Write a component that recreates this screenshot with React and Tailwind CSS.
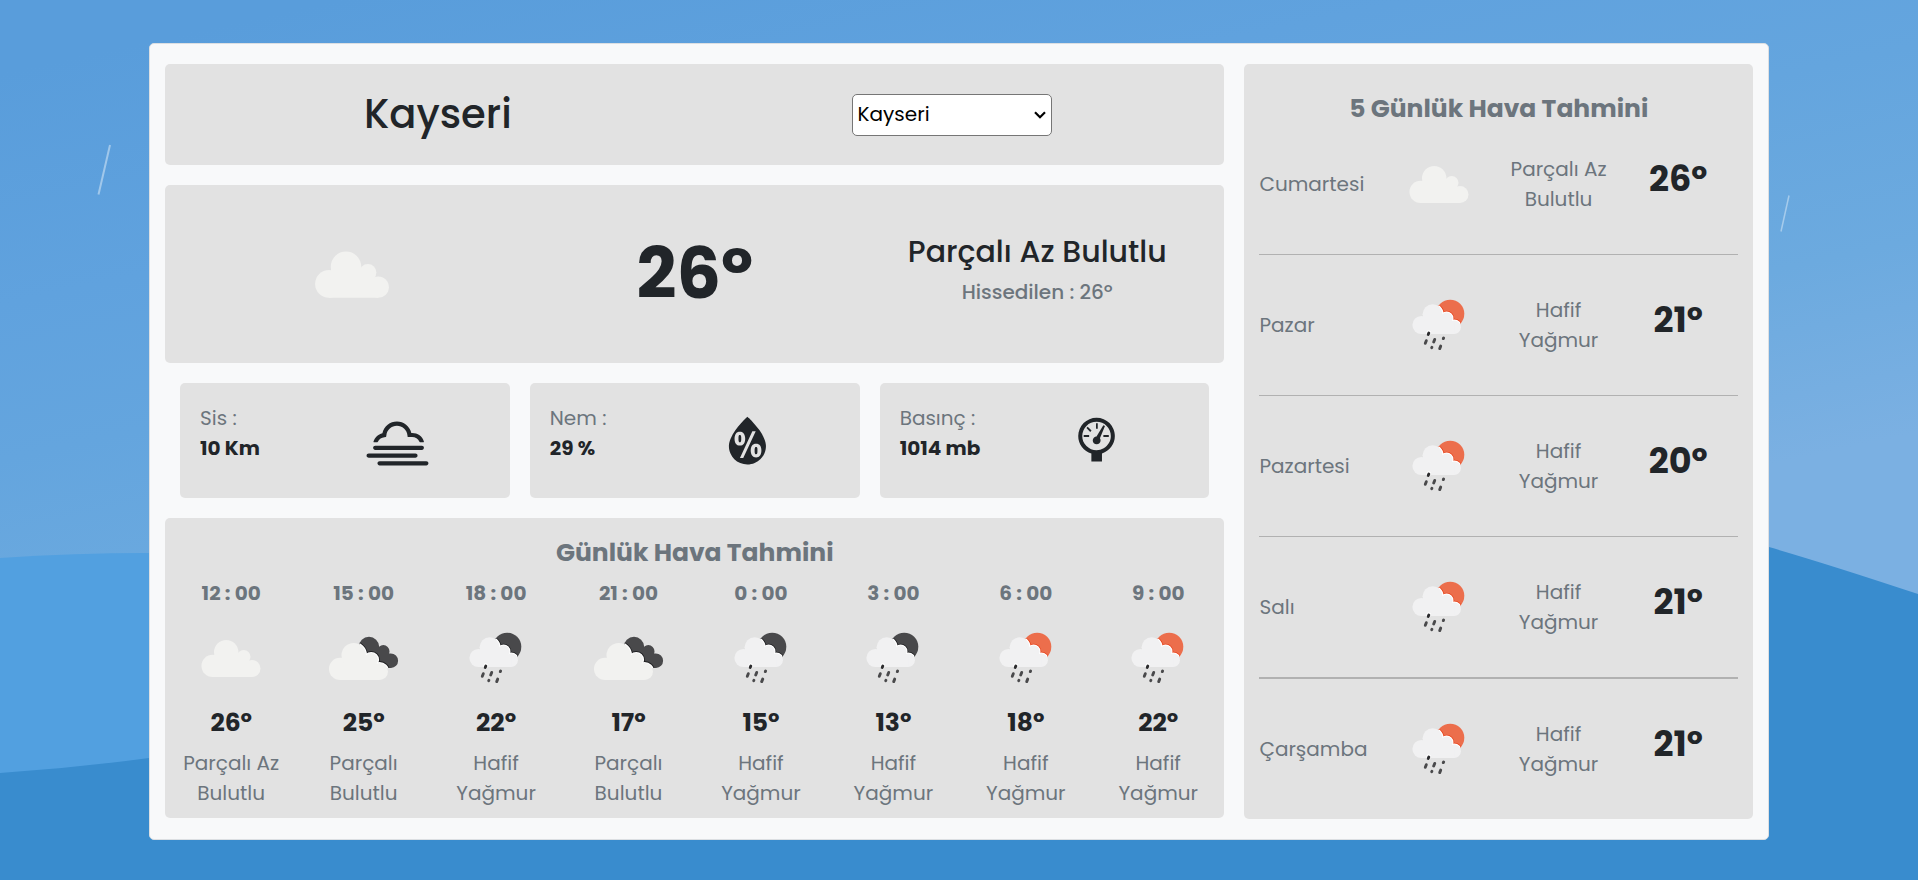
import { useId, useState } from 'react'
import { WiBarometer, WiFog, WiHumidity } from 'react-icons/wi'

const NIGHT = '#49494b'
const SUN = '#ec6e4c'

function CloudShape(props) {
  return (
    <g {...props}>
      <circle cx="21.6" cy="47.9" r="11.1" />
      <circle cx="35.2" cy="34.2" r="12.2" />
      <circle cx="52.7" cy="38.8" r="6.8" />
      <circle cx="61" cy="50.5" r="8.5" />
      <path d="M21.6 44h39.4v15h-39.4zM30 38h26v12h-26z" />
    </g>
  )
}

function SmallCloudShape(props) {
  return (
    <g {...props}>
      <circle cx="23.5" cy="40" r="9.1" />
      <circle cx="34.6" cy="29.3" r="10" />
      <circle cx="48.6" cy="33.5" r="5.9" />
      <circle cx="56.2" cy="42.3" r="6.7" />
      <path d="M23.5 38h32.7v11h-32.7zM30 32h21v12h-21z" />
    </g>
  )
}

function FewCloudsIcon() {
  return <CloudShape fill="#f2f2f0" />
}

function BrokenCloudsIcon({ clipId }) {
  return (
    <g transform="translate(-1 0)">
      <clipPath id={clipId}>
        <circle cx="46" cy="29" r="10.2" />
        <circle cx="60.3" cy="33.3" r="6.2" />
        <circle cx="67.8" cy="42.7" r="7.3" />
        <path d="M40 30h22v6l6 14h-28z" />
      </clipPath>
      <g clipPath={`url(#${clipId})`}>
        <path fill={NIGHT} d="M0 0h80v80H0z" />
        <g transform="translate(-4.5 3)">
          <CloudShape fill="none" stroke="#1f1f21" strokeWidth="4" />
          <CloudShape fill="none" stroke="#fff" strokeWidth="2.2" />
        </g>
      </g>
      <g transform="translate(-4.5 3)">
        <CloudShape fill="#f2f2f0" />
      </g>
    </g>
  )
}

function RainIcon({ clipId, disc, rim }) {
  return (
    <g transform="translate(-1 0)">
      <clipPath id={clipId}>
        <circle cx="52.2" cy="28.8" r="14.1" />
      </clipPath>
      <g clipPath={`url(#${clipId})`}>
        <path fill={disc} d="M0 0h80v80H0z" />
        <SmallCloudShape fill="none" stroke={rim} strokeWidth="3.6" />
        <SmallCloudShape fill="none" stroke="#fff" strokeWidth="2" />
      </g>
      <SmallCloudShape fill="#f1f1f2" />
      <g strokeLinecap="round" stroke={NIGHT} strokeWidth="2.9">
        <path stroke="#fff" strokeWidth="4.4" d="M30.3 48.6l.5-1.1" />
        <path stroke="#2b2b2d" d="M30.2 49.5l.6-1.4" />
        <path d="M27.3 58.3l1-2.6" />
        <path d="M35.7 57l1-2.6" />
        <path d="M33.7 62.7l.2-.4" />
        <path d="M45.3 53.6l.3-.6" />
        <path d="M41.7 63.6l1-2.5" />
      </g>
    </g>
  )
}

function WeatherIcon({ type, className = 'size-20' }) {
  const clipId = useId()
  return (
    <svg viewBox="0 0 80 80" className={className} aria-hidden="true">
      {type === 'few' && <FewCloudsIcon />}
      {type === 'broken' && <BrokenCloudsIcon clipId={clipId} />}
      {type === 'rainNight' && <RainIcon clipId={clipId} disc={NIGHT} rim="#1f1f21" />}
      {type === 'rainDay' && <RainIcon clipId={clipId} disc={SUN} rim="#e8441c" />}
    </svg>
  )
}

function Background() {
  return (
    <svg
      viewBox="0 0 1918 880"
      preserveAspectRatio="none"
      className="absolute inset-0 h-full w-full"
      aria-hidden="true"
    >
      <defs>
        <linearGradient id="sky" gradientUnits="userSpaceOnUse" x1="800" y1="-100" x2="960" y2="640">
          <stop offset="0" stopColor="#599ddb" />
          <stop offset="0.3" stopColor="#60a2de" />
          <stop offset="0.5" stopColor="#64a5de" />
          <stop offset="0.75" stopColor="#6caadf" />
          <stop offset="1" stopColor="#7bb0e2" />
        </linearGradient>
      </defs>
      <path fill="url(#sky)" d="M0 0h1918v880H0z" />
      <path fill="#52a0e0" d="M0 558Q75 553 149 553Q600 553 900 700L900 880H0Z" />
      <path
        fill="#398cce"
        d="M0 773Q75 768 149 758C600 700 900 520 1400 500C1560 495 1680 515 1769 547Q1831 565 1918 594V880H0Z"
      />
      <path stroke="#fff" strokeOpacity="0.42" strokeWidth="2" d="M110 145L98.5 194.5" />
      <path stroke="#fff" strokeOpacity="0.4" strokeWidth="1.5" d="M1789 195.5L1781 231.5" />
    </svg>
  )
}

const cities = ['Kayseri', 'Ankara', 'İstanbul', 'İzmir']

const details = [
  { label: 'Sis :', value: '10 Km', Icon: WiFog },
  { label: 'Nem :', value: '29 %', Icon: WiHumidity },
  { label: 'Basınç :', value: '1014 mb', Icon: WiBarometer },
]

const hours = [
  { time: '12 : 00', icon: 'few', temp: 26, text: 'Parçalı Az Bulutlu' },
  { time: '15 : 00', icon: 'broken', temp: 25, text: 'Parçalı Bulutlu' },
  { time: '18 : 00', icon: 'rainNight', temp: 22, text: 'Hafif Yağmur' },
  { time: '21 : 00', icon: 'broken', temp: 17, text: 'Parçalı Bulutlu' },
  { time: '0 : 00', icon: 'rainNight', temp: 15, text: 'Hafif Yağmur' },
  { time: '3 : 00', icon: 'rainNight', temp: 13, text: 'Hafif Yağmur' },
  { time: '6 : 00', icon: 'rainDay', temp: 18, text: 'Hafif Yağmur' },
  { time: '9 : 00', icon: 'rainDay', temp: 22, text: 'Hafif Yağmur' },
]

const days = [
  { day: 'Cumartesi', icon: 'few', temp: 26, text: 'Parçalı Az Bulutlu' },
  { day: 'Pazar', icon: 'rainDay', temp: 21, text: 'Hafif Yağmur' },
  { day: 'Pazartesi', icon: 'rainDay', temp: 20, text: 'Hafif Yağmur' },
  { day: 'Salı', icon: 'rainDay', temp: 21, text: 'Hafif Yağmur' },
  { day: 'Çarşamba', icon: 'rainDay', temp: 21, text: 'Hafif Yağmur' },
]

export default function App() {
  const [city, setCity] = useState('Kayseri')

  return (
    <div className="relative min-h-screen bg-[#398cce] px-4 pt-[43px] pb-10 font-['Poppins','Inter',sans-serif] text-[20px] leading-[30px] text-[#212529]">
      <Background />
      <main className="relative mx-auto grid max-w-[1620px] grid-cols-[25fr_12fr] items-start gap-5 rounded-[5px] border border-[#dcdfe2] bg-[#f8f9fa] px-[15px] py-5">
        <div className="flex flex-col gap-5">
          <header className="grid grid-cols-2 items-center justify-items-center rounded-[5px] bg-[#e2e2e2] px-4 py-5">
            <h1 className="text-[40px] leading-[61px] font-medium">{city}</h1>
            <div className="relative">
              <select
                aria-label="Şehir"
                value={city}
                onChange={(e) => setCity(e.target.value)}
                className="block h-[42px] w-[200px] appearance-none rounded-[5px] border border-[#767676] bg-white pr-6 pb-px pl-[5px] text-black"
              >
                {cities.map((name) => (
                  <option key={name}>{name}</option>
                ))}
              </select>
              <svg
                viewBox="0 0 12 8"
                className="pointer-events-none absolute top-[17px] right-[6px] h-2 w-3"
                fill="none"
                stroke="#000"
                strokeWidth="2.2"
                aria-hidden="true"
              >
                <path d="M1 1.2l5 5l5-5" />
              </svg>
            </div>
          </header>

          <section className="grid grid-cols-3 items-center justify-items-center rounded-[5px] bg-[#e2e2e2] px-4 py-[39px]">
            <WeatherIcon type="few" className="size-[100px]" />
            <p className="text-[70px] leading-[80px] font-bold">26º</p>
            <div className="pb-[7px] text-center">
              <h2 className="mb-[7px] text-[30px] leading-9 font-medium">Parçalı Az Bulutlu</h2>
              <p className="font-medium text-[#6c757d]">Hissedilen : 26º</p>
            </div>
          </section>

          <section className="grid grid-cols-3 gap-5 px-[15px]">
            {details.map(({ label, value, Icon }) => (
              <div key={label} className="grid grid-cols-[1fr_2fr] rounded-[5px] bg-[#e2e2e2] py-5 pr-[14px] pl-5">
                <div className="whitespace-nowrap">
                  <p className="text-[#6c757d]">{label}</p>
                  <p className="font-bold">{value}</p>
                </div>
                <Icon className="size-[75px] justify-self-center" aria-hidden="true" />
              </div>
            ))}
          </section>

          <section className="rounded-[5px] bg-[#e2e2e2] pt-[17px] pb-[10px] text-center">
            <h2 className="mb-[7px] text-[25px] leading-9 font-bold text-[#6c757d]">Günlük Hava Tahmini</h2>
            <div className="grid grid-cols-8">
              {hours.map(({ time, icon, temp, text }) => (
                <div key={time} className="flex flex-col items-center px-[10px]">
                  <p className="mb-[10px] font-bold text-[#6c757d]">{time}</p>
                  <WeatherIcon type={icon} />
                  <p className="my-[7px] text-[25px] leading-9 font-bold">{temp}º</p>
                  <p className="text-[#6c757d]">{text}</p>
                </div>
              ))}
            </div>
          </section>
        </div>

        <aside className="rounded-[5px] bg-[#e2e2e2] px-[15px] pt-[27px] pb-[30px]">
          <h2 className="mb-[17px] text-center text-[25px] leading-9 font-bold text-[#6c757d]">
            5 Günlük Hava Tahmini
          </h2>
          {days.map(({ day, icon, temp, text }, i) => (
            <div key={day}>
              {i > 0 && (
                <hr className={i === 4 ? 'my-[30px] border-t-2 border-[#b1b1b1]' : 'my-[30px] border-t border-[#b1b1b1]'} />
              )}
              <div className="grid grid-cols-4 items-center justify-items-center">
                <p className="justify-self-start text-[#6c757d]">{day}</p>
                <WeatherIcon type={icon} />
                <p className="px-[10px] text-center text-[#6c757d]">{text}</p>
                <p className="pb-[10px] text-[35px] leading-[42px] font-bold">{temp}º</p>
              </div>
            </div>
          ))}
        </aside>
      </main>
    </div>
  )
}
